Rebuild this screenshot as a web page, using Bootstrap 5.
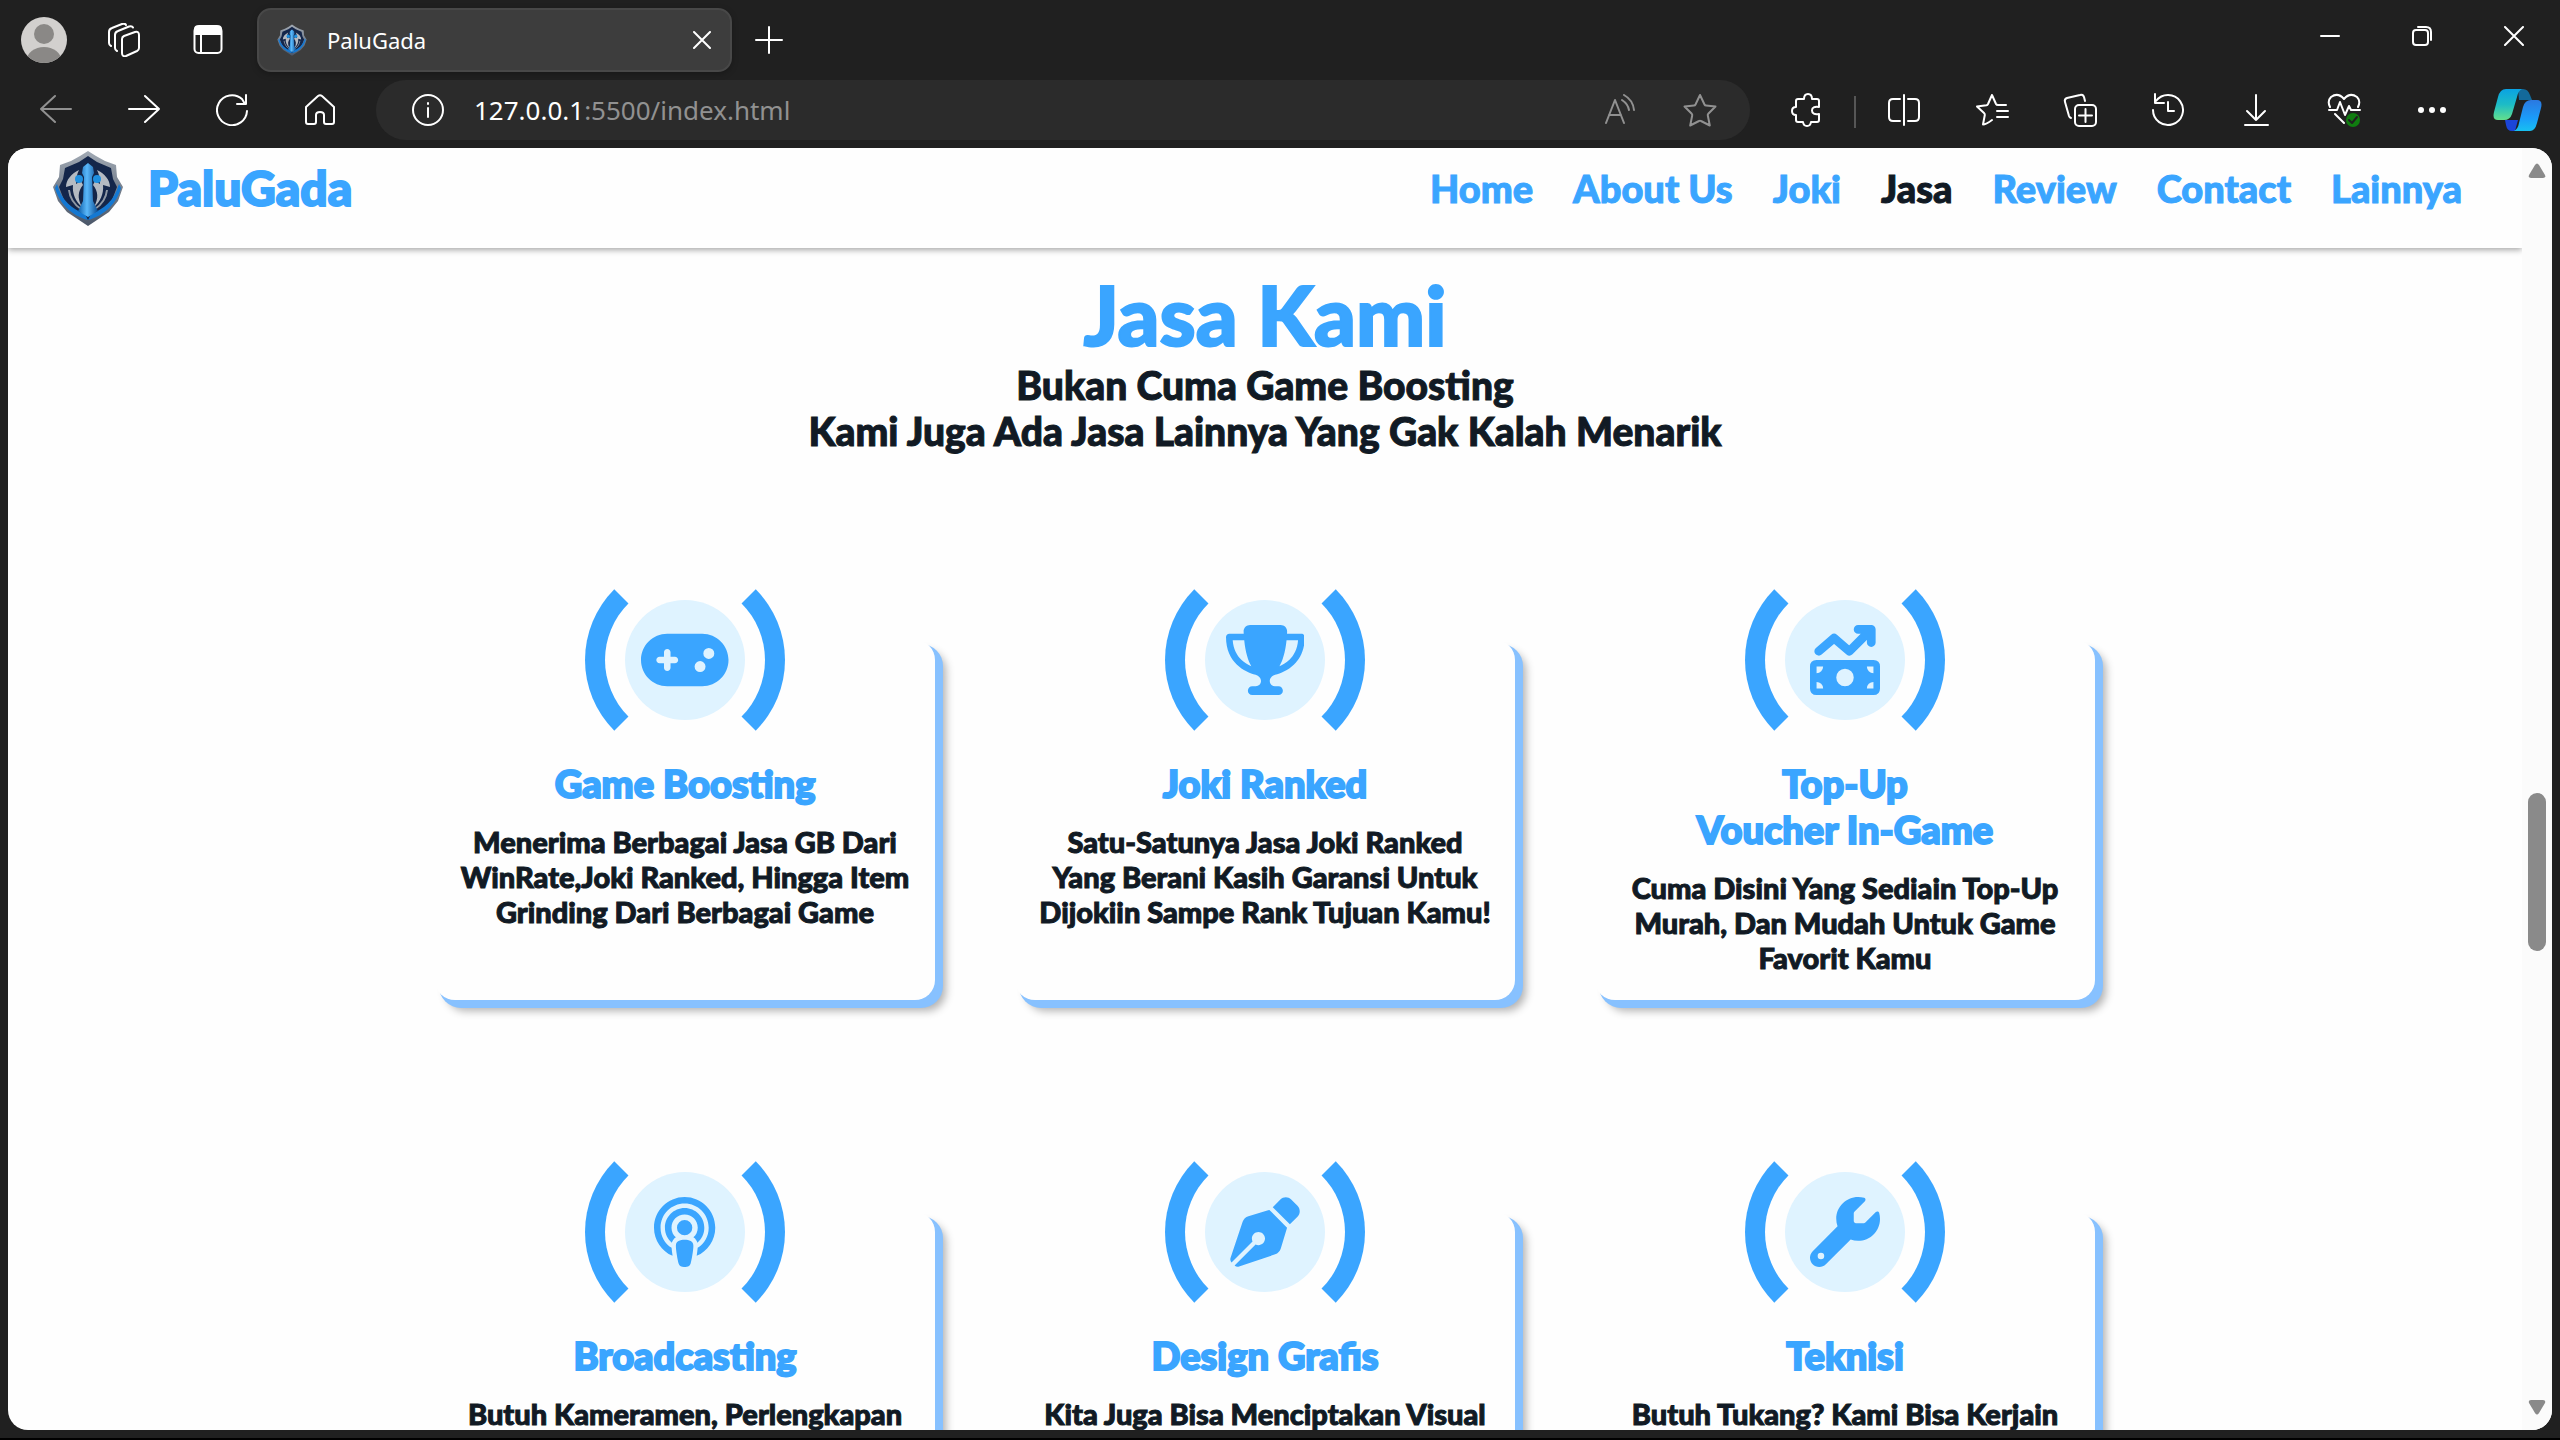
<!DOCTYPE html>
<html lang="id">
<head>
<meta charset="utf-8">
<meta name="viewport" content="width=device-width, initial-scale=1">
<title>PaluGada</title>
<link rel="stylesheet" href="https://cdn.jsdelivr.net/npm/bootstrap@5.3.0/dist/css/bootstrap.min.css">
<style>
  :root { --sky: #3aa5ff; --ink: #111a24; --chrome: #202020; }
  body { background: var(--chrome); border-bottom: 2px solid #000; font-family: Lato, "Open Sans", sans-serif; }
  svg { display: block; flex: none; }
  .line-icon { fill: none; stroke: currentColor; stroke-width: 2; stroke-linecap: round; stroke-linejoin: round; }

  /* browser frame */
  .tab-strip { height: 80px; padding-left: 4px; font-family: "Noto Sans", sans-serif; }
  .tool-strip { height: 68px; padding-left: 12px; font-family: "Noto Sans", sans-serif; }
  .frame-btn { width: 88px; height: 60px; padding: 0; border: 0; background: none; color: #fff; display: flex; align-items: center; justify-content: center; }
  .tab-strip .frame-btn { width: 80px; }
  .win-btn { height: 72px; }
  .tab-strip .win-btn { width: 92px; }
  .copilot-btn { width: 84px; }
  .dimmed { color: #919191; }
  .open-tab { width: 475px; height: 64px; margin-left: 9px; padding: 0 16px 0 18px; gap: 20px; background: #3d3d3d; border: 2px solid #484848; border-radius: 14px; color: #fff; font-size: 22px; box-shadow: 0 2px 6px rgba(0,0,0,.25); }
  .tab-strip .add-btn { width: 74px; }
  .tab-strip .close-btn { width: 24px; height: 40px; }
  .address { height: 60px; margin: 0 12px; padding: 0 10px 0 36px; border-radius: 30px; background: #2b2b2b; }
  .address-text { margin-left: 30px; font-size: 26px; line-height: 40px; color: #919191; text-decoration: none; }
  .address-text b { font-weight: 400; color: #fff; }
  .address .frame-btn { width: 80px; }
  .split-rule { width: 2px; height: 32px; background: #565656; }

  /* page */
  .viewport-frame { margin: 0 8px 8px; border-radius: 20px; background: #fefefe; }
  .scroll-rail { width: 30px; background: #fbfbfb; padding: 15px 0; }
  .scroll-thumb { width: 18px; height: 158px; margin-top: 4px; border-radius: 9px; background: #8a8a8a; }
  .site-header { height: 100px; padding: 0 60px 0 44px; box-shadow: 0 2px 6px rgba(0,0,0,.35); background: #fefefe; }
  .brand-link, .menu-link, .section-title, .section-lead, .service-text { -webkit-text-stroke: 1px currentColor; }
  .section-title, .service-name, .brand-link { -webkit-text-stroke: 2px currentColor; }
  .brand-link { gap: 24px; height: 80px; font-size: 48px; font-weight: 900; line-height: 58px; color: var(--sky); text-decoration: none; }
  .menu-link { padding: 0; font-size: 38px; font-weight: 900; line-height: 46px; color: var(--sky); }
  .menu { gap: 40px; height: 80px; }
  .menu-link.current { color: var(--ink); }
  .section-title { margin: 20px 0 2px; font-size: 82px; font-weight: 900; line-height: 92px; color: var(--sky); }
  .section-lead { font-size: 39px; font-weight: 900; line-height: 46px; color: var(--ink); margin-bottom: 186px; }
  .services { column-gap: 80px; row-gap: 212px; max-width: 1700px; }
  .service { width: 500px; height: 360px; border-radius: 20px; background: #fefefe; box-shadow: 6px 6px 0 2px #87c1ff, 11px 11px 8px rgba(0,0,0,.3); }
  .ring { width: 200px; height: 200px; margin-top: -80px; border: 20px solid var(--sky); border-top-color: #fefefe; border-bottom-color: #fefefe; border-radius: 50%; background: #fefefe; flex: none; }
  .disc { width: 120px; height: 120px; border-radius: 50%; background: #dff3ff; color: var(--sky); }
  .disc svg { height: 70px; fill: currentColor; }
  .service-name { margin: 0 0 18px; font-size: 38px; font-weight: 900; line-height: 46px; color: var(--sky); }
  .service-text { margin: 0; font-size: 29px; font-weight: 900; line-height: 35px; color: var(--ink); white-space: nowrap; }
</style>
<script src="https://cdn.jsdelivr.net/npm/bootstrap@5.3.0/dist/js/bootstrap.bundle.min.js"></script>
</head>
<body class="vh-100 d-flex flex-column overflow-hidden">

<svg width="0" height="0" class="position-absolute" aria-hidden="true">
  <defs>
    <linearGradient id="steel" x1="0" y1="0" x2="0" y2="1"><stop offset="0" stop-color="#a2aab4"/><stop offset="1" stop-color="#4a5668"/></linearGradient>
    <linearGradient id="azure" x1="0" y1="0" x2="1" y2="0"><stop offset="0" stop-color="#0d5da8"/><stop offset=".45" stop-color="#5ab8fb"/><stop offset="1" stop-color="#0b4c92"/></linearGradient>
    <linearGradient id="cop-a" x1="0" y1="0" x2="0" y2="1"><stop offset="0" stop-color="#0aa2e3"/><stop offset=".5" stop-color="#1dbcc6"/><stop offset="1" stop-color="#63e08c"/></linearGradient>
    <linearGradient id="cop-b" x1="0" y1="0" x2="0" y2="1"><stop offset="0" stop-color="#2b78e0"/><stop offset=".6" stop-color="#1a9dfa"/><stop offset="1" stop-color="#18c0f0"/></linearGradient>
    <symbol id="crest" viewBox="0 0 72 76">
      <path d="M36 1l8 5 9 5 11 4 1 12 6 10-5 14-9 11-12 8-9 6-9-6-12-8-9-11-5-14 6-10 1-12 11-4 9-5z" fill="url(#steel)"/>
      <path d="M36 6l9 6 14 6 2 11 4 8-5 13-9 10-15 10-15-10-9-10-5-13 4-8 2-11 14-6z" fill="#14264a"/>
      <path d="M5 34c5 17 15 25 28 30l3 6C20 66 7 53 3 38z" fill="#1478d2"/>
      <path d="M67 34c-5 17-15 25-28 30l-3 6c16-4 29-17 33-32z" fill="#1478d2"/>
      <path d="M27 20c-8 4-13 10-13 17l7-2c-1 9 3 17 9 22-5-9-4-16 1-22l-2-4-5 3c0-6 1-10 3-14z" fill="#b4bac2"/>
      <path d="M45 20c8 4 13 10 13 17l-7-2c1 9-3 17-9 22 5-9 4-16-1-22l2-4 5 3c0-6-1-10-3-14z" fill="#b4bac2"/>
      <path d="M17 40c1 9 6 15 12 19M55 40c-1 9-6 15-12 19" fill="none" stroke="#8f98a4" stroke-width="2"/>
      <circle cx="27" cy="29" r="4" fill="#1e8fe0"/><circle cx="45" cy="29" r="4" fill="#1e8fe0"/>
      <path d="M36 13l5 4 1 6-2 4 1 24 5 10-10 6-10-6 5-10 1-24-2-4 1-6z" fill="url(#azure)"/>
    </symbol>
  </defs>
</svg>

<div class="tab-strip d-flex flex-shrink-0 align-items-center">
  <button class="frame-btn" aria-label="Profil">
    <svg width="46" height="46" viewBox="0 0 46 46"><clipPath id="round"><circle cx="23" cy="23" r="23"/></clipPath><g clip-path="url(#round)"><rect width="46" height="46" fill="#d2d0ce"/><circle cx="23" cy="17" r="10" fill="#8a8886"/><ellipse cx="23" cy="43" rx="17" ry="13" fill="#8a8886"/></g></svg>
  </button>
  <button class="frame-btn" aria-label="Ruang kerja">
    <svg class="line-icon" width="34" height="34" viewBox="0 0 34 34"><path d="M15 16q0-2 2-3l11-4q4-1 4 3v13q0 2-2 3l-11 5q-4 1-4-3z"/><path d="M10 28q-2-1-2-3V12q0-3 3-4l11-4.500q3-1 4 1M4 23q-2-1-2-3V9q0-3 3-4l10-4q3-1 4 1"/></svg>
  </button>
  <button class="frame-btn ms-1" aria-label="Tindakan tab">
    <svg class="line-icon" width="30" height="30" viewBox="0 0 30 30"><rect x="1.500" y="2" width="27" height="26" rx="4"/><path d="M2 4q0-3 4-3h18q4 0 4 3v5H2z" fill="currentColor"/><path d="M8 10v18"/></svg>
  </button>
  <div class="open-tab d-flex align-items-center">
    <svg width="30" height="32"><use href="#crest"/></svg>
    <span class="flex-grow-1">PaluGada</span>
    <button class="frame-btn close-btn" aria-label="Tutup tab"><svg class="line-icon" width="18" height="18" viewBox="0 0 18 18"><path d="M1 1l16 16M17 1L1 17"/></svg></button>
  </div>
  <button class="frame-btn add-btn" aria-label="Tab baru"><svg class="line-icon" width="28" height="28" viewBox="0 0 28 28"><path d="M14 1v26M1 14h26"/></svg></button>
  <div class="d-flex ms-auto align-self-start">
    <button class="frame-btn win-btn" aria-label="Perkecil"><svg class="line-icon" width="20" height="20" viewBox="0 0 20 20"><path d="M1 10h18"/></svg></button>
    <button class="frame-btn win-btn" aria-label="Pulihkan"><svg class="line-icon" width="20" height="20" viewBox="0 0 20 20"><rect x="1" y="4" width="15" height="15" rx="3"/><path d="M6 1h8q5 0 5 5v8"/></svg></button>
    <button class="frame-btn win-btn" aria-label="Tutup"><svg class="line-icon" width="20" height="20" viewBox="0 0 20 20"><path d="M1 1l18 18M19 1L1 19"/></svg></button>
  </div>
</div>

<div class="tool-strip d-flex flex-shrink-0">
  <button class="frame-btn dimmed" aria-label="Kembali"><svg class="line-icon" width="32" height="32" viewBox="0 0 32 32"><path d="M31 15H1M15 2L1 15l14 13"/></svg></button>
  <button class="frame-btn" aria-label="Maju"><svg class="line-icon" width="32" height="32" viewBox="0 0 32 32"><path d="M1 15h30M17 2l14 13-14 13"/></svg></button>
  <button class="frame-btn" aria-label="Muat ulang"><svg class="line-icon" width="32" height="32" viewBox="0 0 32 32"><path d="M31 17a15 15 0 1 1-5-12l3 5M30 1v9h-9"/></svg></button>
  <button class="frame-btn" aria-label="Beranda"><svg class="line-icon" width="32" height="32" viewBox="0 0 32 32"><path d="M2 13L14 2q2-1.500 4 0l12 11v15q0 2-2 2h-6q-2 0-2-2v-7q0-3-4-3t-4 3v7q0 2-2 2H4q-2 0-2-2z"/></svg></button>
  <div class="address d-flex align-items-center flex-grow-1">
    <svg class="line-icon text-white" width="32" height="32" viewBox="0 0 32 32"><circle cx="16" cy="16" r="15"/><path d="M16 14v9M16 9v1"/></svg>
    <a class="address-text me-auto" href="#"><b>127.0.0.1</b>:5500/index.html</a>
    <button class="frame-btn dimmed" aria-label="Baca lantang"><svg class="line-icon" width="32" height="32" viewBox="0 0 32 32"><path d="M2 29L11 6l9 23M5 21h12M18 6q6 4 7 10M20 1q9 5 10 15"/></svg></button>
    <button class="frame-btn dimmed" aria-label="Favorit"><svg class="line-icon" width="34" height="34" viewBox="0 0 34 34"><path d="M17 2l4.500 9.500q.5 1 1.500 1l9.500 1-7 7q-1 1-.7 2l2 10L18 28q-1-.6-2 0l-8.800 4.500 2-10q.3-1-.7-2l-7-7 9.500-1q1 0 1.500-1z"/></svg></button>
  </div>
  <button class="frame-btn" aria-label="Ekstensi"><svg class="line-icon" width="30" height="34" viewBox="0 0 30 34"><path d="M5 8q0-2 2-2h6q0-5 4-5t4 5h5q2 0 2 2v6q-7-1-7 3.500t7 3.500v6q0 2-2 2h-6q-.5 4-4 4t-4-4H7q-2 0-2-2v-5q-4 0-4-4t4-4z"/></svg></button>
  <div class="split-rule align-self-start mx-1 mt-3"></div>
  <button class="frame-btn" aria-label="Layar terpisah"><svg class="line-icon" width="32" height="32" viewBox="0 0 32 32"><path d="M16 1v30M12 5H5q-4 0-4 4v14q0 4 4 4h7M20 5h7q4 0 4 4v14q0 4-4 4h-7"/></svg></button>
  <button class="frame-btn" aria-label="Daftar favorit"><svg class="line-icon" width="34" height="34" viewBox="0 0 34 34"><path d="M31 12h-8q-1.500 0-2-1L17 2l-4 9q-.5 1-1.500 1.200L2 13.500l7 6.500q1 1 .8 2L8 31.500q3 0 9-4.500M22 18h11M22 24h11"/></svg></button>
  <button class="frame-btn" aria-label="Koleksi"><svg class="line-icon" width="34" height="34" viewBox="0 0 34 34"><rect x="12" y="12" width="21" height="21" rx="4"/><path d="M22.500 16v13M16 22.500h13M22 8l-1-4q-1-3-4-2L4 5Q1 6 2 9l4 14q.5 1.500 2 2"/></svg></button>
  <button class="frame-btn" aria-label="Riwayat"><svg class="line-icon" width="34" height="34" viewBox="0 0 34 34"><path d="M2 17A15 15 0 1 0 5 8M4 1v9h9M17 9v9h6"/></svg></button>
  <button class="frame-btn" aria-label="Unduhan"><svg class="line-icon" width="34" height="34" viewBox="0 0 34 34"><path d="M17 2v25M8 18l9 9 9-9M6 32h23"/></svg></button>
  <button class="frame-btn" aria-label="Performa"><svg class="line-icon" width="34" height="36" viewBox="0 0 34 36"><path d="M3 15Q0 9 4 5q7-5 13 2 6-7 13-2 4 4 1 10M2 18h8l3-8 5 13 4-9 2 4h9M8 22l9 9"/><circle cx="26" cy="28" r="7" fill="#107c10" stroke="none"/><path d="M22 28l3 3 5-6" stroke="#202020"/></svg></button>
  <button class="frame-btn" aria-label="Lainnya"><svg width="28" height="6" viewBox="0 0 28 6" fill="currentColor"><circle cx="3" cy="3" r="3"/><circle cx="14" cy="3" r="3"/><circle cx="25" cy="3" r="3"/></svg></button>
  <button class="frame-btn copilot-btn" aria-label="Copilot">
    <svg width="50" height="44" viewBox="0 0 50 44"><path d="M25 1h5q5 0 7 6l2 5H26z" fill="#13699a"/><path d="M12 32h13l-3 11h-3q-5 0-6-6z" fill="#1b45d8"/><path d="M13 1h16q-4 2-5 8l-5 17q-2 6-8 6H5q-6 0-4-8L5 9q2-8 8-8z" fill="url(#cop-a)"/><path d="M37 43H21q4-2 5-8l4-16q2-7 8-7h6q6 0 4 8l-4 15q-2 8-7 8z" fill="url(#cop-b)"/></svg>
  </button>
</div>

<div class="viewport-frame d-flex flex-grow-1 overflow-hidden">
  <div class="flex-grow-1 overflow-hidden">
    <header class="site-header d-flex justify-content-between align-items-start">
      <a class="brand-link d-flex align-items-center" href="#"><svg width="72" height="76"><use href="#crest"/></svg>PaluGada</a>
      <nav class="menu nav align-items-center" aria-label="Menu utama">
        <a class="menu-link nav-link" href="#">Home</a>
        <a class="menu-link nav-link" href="#">About Us</a>
        <a class="menu-link nav-link" href="#">Joki</a>
        <a class="menu-link nav-link current" href="#" aria-current="page">Jasa</a>
        <a class="menu-link nav-link" href="#">Review</a>
        <a class="menu-link nav-link" href="#">Contact</a>
        <a class="menu-link nav-link" href="#">Lainnya</a>
      </nav>
    </header>
    <main class="text-center">
      <h1 class="section-title">Jasa Kami</h1>
      <p class="section-lead">Bukan Cuma Game Boosting<br>Kami Juga Ada Jasa Lainnya Yang Gak Kalah Menarik</p>
      <div class="services d-flex flex-wrap justify-content-center mx-auto">
        <article class="service d-flex flex-column align-items-center">
          <div class="ring d-flex align-items-center justify-content-center"><div class="disc d-flex align-items-center justify-content-center"><svg viewBox="0 0 640 512"><path d="M192 64C86 64 0 150 0 256S86 448 192 448H448c106 0 192-86 192-192s-86-192-192-192H192zM496 168a40 40 0 1 1 0 80 40 40 0 1 1 0-80zM392 304a40 40 0 1 1 80 0 40 40 0 1 1 -80 0zM168 200c0-13.300 10.700-24 24-24s24 10.700 24 24v32h32c13.300 0 24 10.700 24 24s-10.700 24-24 24H216v32c0 13.300-10.700 24-24 24s-24-10.700-24-24V280H136c-13.300 0-24-10.700-24-24s10.700-24 24-24h32V200z"/></svg></div></div>
          <h2 class="service-name">Game Boosting</h2>
          <p class="service-text">Menerima Berbagai Jasa GB Dari<br>WinRate,Joki Ranked, Hingga Item<br>Grinding Dari Berbagai Game</p>
        </article>
        <article class="service d-flex flex-column align-items-center">
          <div class="ring d-flex align-items-center justify-content-center"><div class="disc d-flex align-items-center justify-content-center"><svg viewBox="0 0 576 512"><path d="M400 0H176c-26.500 0-48.100 21.800-47.100 48.200c.2 5.300 .4 10.600 .7 15.800H24C10.700 64 0 74.700 0 88c0 92.600 33.500 157 78.500 200.700c44.300 43.100 98.300 64.800 138.100 75.800c23.400 6.500 39.400 26 39.400 45.600c0 20.900-17 37.900-37.900 37.900H192c-17.700 0-32 14.300-32 32s14.300 32 32 32H384c17.700 0 32-14.300 32-32s-14.300-32-32-32H357.900C337 448 320 431 320 410.100c0-19.600 15.900-39.200 39.400-45.600c39.900-11 93.900-32.700 138.200-75.800C542.500 245 576 180.600 576 88c0-13.300-10.700-24-24-24H446.400c.3-5.200 .5-10.400 .7-15.800C448.100 21.800 426.500 0 400 0zM48.900 112h84.400c9.100 90.100 29.200 150.300 51.900 190.600c-24.900-11-50.800-26.500-73.200-48.300c-32-31.100-58-76-63-142.300zM464.100 254.300c-22.400 21.800-48.300 37.300-73.200 48.300c22.700-40.300 42.800-100.500 51.900-190.600h84.400c-5.100 66.300-31.100 111.200-63 142.300z"/></svg></div></div>
          <h2 class="service-name">Joki Ranked</h2>
          <p class="service-text">Satu-Satunya Jasa Joki Ranked<br>Yang Berani Kasih Garansi Untuk<br>Dijokiin Sampe Rank Tujuan Kamu!</p>
        </article>
        <article class="service d-flex flex-column align-items-center">
          <div class="ring d-flex align-items-center justify-content-center"><div class="disc d-flex align-items-center justify-content-center"><svg viewBox="0 0 512 512"><path d="M64 192L176 96l112 96L448 32M352 32h96v96" fill="none" stroke="currentColor" stroke-width="64" stroke-linecap="round" stroke-linejoin="round"/><path fill-rule="evenodd" d="M48 256h416q48 0 48 48v160q0 48-48 48H48q-48 0-48-48V304q0-48 48-48zM256 320a64 64 0 1 0 0 128 64 64 0 1 0 0-128zM48 304v48a48 48 0 0 0 48-48zM464 304v48a48 48 0 0 1-48-48zM48 464v-48a48 48 0 0 1 48 48zM464 464v-48a48 48 0 0 0-48 48z"/></svg></div></div>
          <h2 class="service-name">Top-Up<br>Voucher In-Game</h2>
          <p class="service-text">Cuma Disini Yang Sediain Top-Up<br>Murah, Dan Mudah Untuk Game<br>Favorit Kamu</p>
        </article>
        <article class="service d-flex flex-column align-items-center">
          <div class="ring d-flex align-items-center justify-content-center"><div class="disc d-flex align-items-center justify-content-center"><svg viewBox="0 0 448 512"><path d="M319.400 372c48.500-31.300 80.600-85.900 80.600-148c0-97.200-78.800-176-176-176S48 126.800 48 224c0 62.100 32.100 116.600 80.600 148c1.200 17.300 4 38 7.200 57.100l.2 1C56 395.800 0 316.500 0 224C0 100.300 100.300 0 224 0S448 100.300 448 224c0 92.500-56 171.900-136 206.100l.2-1.100c3.100-19.200 6-39.800 7.200-57zm-2.300-38.100c-1.600-5.700-3.900-11.100-7-16.200c-5.800-9.700-13.500-17-21.900-22.400c19.500-17.600 31.800-43 31.800-71.300c0-53-43-96-96-96s-96 43-96 96c0 28.300 12.300 53.800 31.800 71.300c-8.400 5.400-16.100 12.700-21.900 22.400c-3.100 5.100-5.400 10.500-7 16.200C99.800 307.500 80 268 80 224c0-79.500 64.500-144 144-144s144 64.500 144 144c0 44-19.800 83.500-50.900 109.900zM224 312c32.900 0 64 8.600 64 43.800c0 33-12.900 104.100-20.600 132.900c-5.100 19-24.500 23.400-43.400 23.400s-38.200-4.400-43.400-23.400c-7.800-28.500-20.600-99.700-20.600-132.800c0-35.100 31.100-43.800 64-43.800zm0-144a56 56 0 1 1 0 112 56 56 0 1 1 0-112z"/></svg></div></div>
          <h2 class="service-name">Broadcasting</h2>
          <p class="service-text">Butuh Kameramen, Perlengkapan</p>
        </article>
        <article class="service d-flex flex-column align-items-center">
          <div class="ring d-flex align-items-center justify-content-center"><div class="disc d-flex align-items-center justify-content-center"><svg viewBox="0 0 512 512"><path d="M368.400 18.300L312.700 74.100 437.900 199.300l55.700-55.700c21.900-21.900 21.900-57.300 0-79.200L447.600 18.300c-21.900-21.900-57.300-21.900-79.200 0zM288 94.600l-9.200 2.800L134.700 140.600c-19.900 6-35.700 21.200-42.300 41L3.800 445.800c-3.800 11.300-1 23.900 7.300 32.400L164.700 324.700c-3-6.300-4.700-13.300-4.700-20.700c0-26.500 21.500-48 48-48s48 21.500 48 48s-21.500 48-48 48c-7.400 0-14.400-1.700-20.700-4.700L33.700 500.900c8.600 8.300 21.100 11.200 32.400 7.300l264.300-88.600c19.700-6.600 35-22.400 41-42.300l43.200-144.100 2.700-9.200L288 94.600z"/></svg></div></div>
          <h2 class="service-name">Design Grafis</h2>
          <p class="service-text">Kita Juga Bisa Menciptakan Visual</p>
        </article>
        <article class="service d-flex flex-column align-items-center">
          <div class="ring d-flex align-items-center justify-content-center"><div class="disc d-flex align-items-center justify-content-center"><svg viewBox="0 0 512 512"><path d="M352 320c88.400 0 160-71.600 160-160c0-15.300-2.200-30.100-6.200-44.200c-3.100-10.800-16.400-13.200-24.300-5.300l-76.800 76.800c-3 3-7.100 4.700-11.300 4.700H336c-8.800 0-16-7.200-16-16V118.600c0-4.200 1.700-8.300 4.700-11.300l76.800-76.800c7.900-7.900 5.400-21.200-5.300-24.300C382.100 2.200 367.300 0 352 0C263.600 0 192 71.600 192 160c0 19.100 3.400 37.500 9.500 54.500L19.900 396.100C7.200 408.800 0 426.100 0 444.100C0 481.600 30.400 512 67.900 512c18 0 35.300-7.200 48-19.900L297.500 310.500c17 6.200 35.400 9.500 54.500 9.500zM80 408a24 24 0 1 1 0 48 24 24 0 1 1 0-48z"/></svg></div></div>
          <h2 class="service-name">Teknisi</h2>
          <p class="service-text">Butuh Tukang? Kami Bisa Kerjain</p>
        </article>
      </div>
    </main>
  </div>
  <div class="scroll-rail d-flex flex-column align-items-center justify-content-between flex-shrink-0">
    <svg width="18" height="16" viewBox="0 0 18 16" fill="#8a8a8a"><path d="M7 2q2-3 4 0l6 10q1 3-2 3H3q-3 0-2-3z"/></svg>
    <div class="d-flex flex-column align-items-center flex-grow-1">
      <div class="h-50"></div>
      <div class="scroll-thumb"></div>
    </div>
    <svg width="18" height="16" viewBox="0 0 18 16" fill="#8a8a8a"><path d="M7 14q2 3 4 0l6-10q1-3-2-3H3Q0 1 1 4z"/></svg>
  </div>
</div>
</body>
</html>
